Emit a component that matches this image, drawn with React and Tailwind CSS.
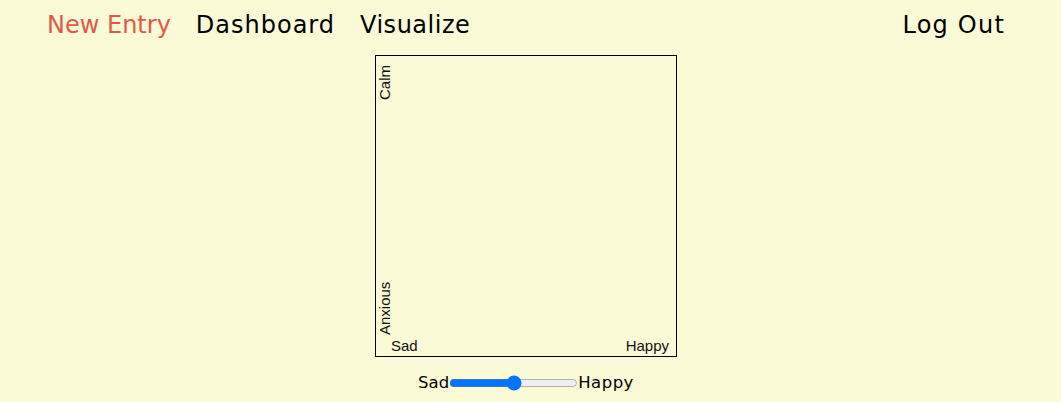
export default function App() {
  return (
    <div className="min-h-screen w-full bg-[#fafad6] font-['DejaVu_Sans',sans-serif]">
      <nav className="flex h-[50px] items-center justify-between pl-[47px] pr-[56px] text-[24px] text-black">
        <div className="flex items-center gap-[25px]">
          <a className="text-[#e05a47]">New Entry</a>
          <a className="tracking-[1px]">Dashboard</a>
          <a className="tracking-[0.5px]">Visualize</a>
        </div>
        <a className="tracking-[1.2px]">Log Out</a>
      </nav>

      <div className="flex flex-col items-center pr-[9px]">
        <div className="mt-[5px] border border-black">
          <svg width="300" height="300" className="block font-['Liberation_Sans',Arial,sans-serif] text-[15px]">
            <text x="14" y="44" transform="rotate(-90 14 44)" fill="#111">Calm</text>
            <text x="14" y="279" transform="rotate(-90 14 279)" fill="#111">Anxious</text>
            <text x="15" y="295" fill="#111">Sad</text>
            <text x="293" y="295" textAnchor="end" fill="#111">Happy</text>
          </svg>
        </div>

        <div className="mt-[14px] flex items-center text-[16.5px] leading-[24px] text-black">
          <span>Sad</span>
          <input type="range" min="0" max="100" defaultValue="50" className="m-0 w-[129px]" />
          <span className="tracking-[0.5px]">Happy</span>
        </div>
      </div>
    </div>
  );
}
